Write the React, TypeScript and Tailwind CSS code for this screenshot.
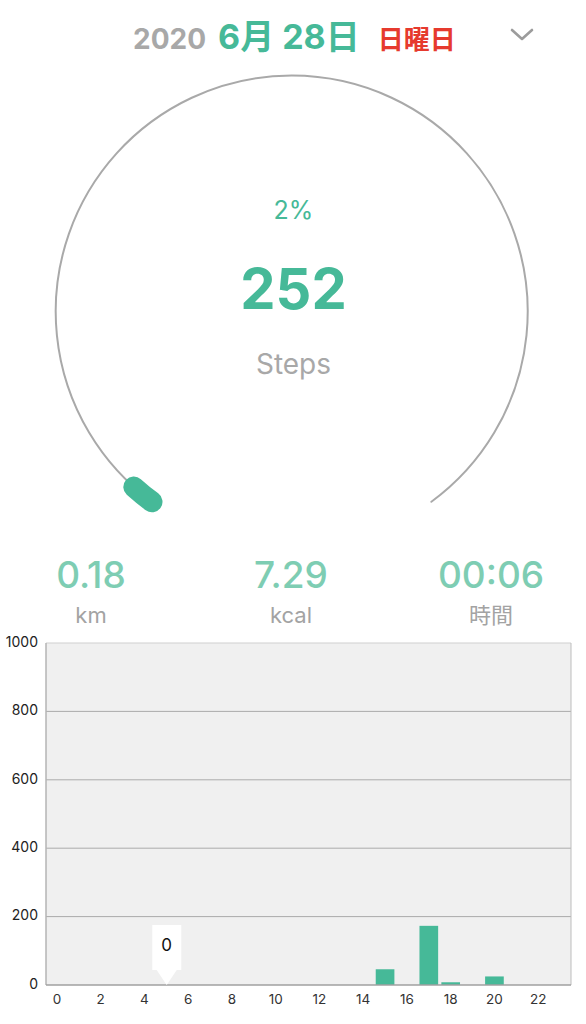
import React from "react";

const FONT = { fontFamily: 'Inter, "Noto Sans CJK JP", "Noto Sans", sans-serif' };

const HOURLY: Record<number, number> = { 15: 46, 17: 173, 18: 8, 20: 25 };

function Gauge() {
  // circle centre (291.7, 237.6) in this box, r = 236
  return (
    <div className="relative h-[470px]">
      <svg className="absolute inset-0" width="586" height="470" viewBox="0 0 586 470">
        <path
          d="M152.0 427.8 A236 236 0 1 1 431.4 427.8"
          fill="none"
          stroke="#a9a9a9"
          strokeWidth="2"
          strokeLinecap="round"
        />
        <path
          d="M152.0 427.8 A236 236 0 0 1 133.8 413.0"
          fill="none"
          stroke="#46b998"
          strokeWidth="21"
          strokeLinecap="round"
        />
      </svg>
      <div className="relative flex flex-col items-center pl-[1px]">
        <div className="mt-[119px] text-[25px] leading-[34px] text-[#46b998]">2%</div>
        <div className="mt-[31px] text-[56px] leading-[62px] font-bold text-[#46b998]">252</div>
        <div className="mt-[27px] text-[28px] leading-[34px] text-[#a8a8a8]">Steps</div>
      </div>
    </div>
  );
}

function Stat({ value, label }: { value: string; label: string }) {
  return (
    <div className="w-[160px] flex flex-col items-center">
      <div className="text-[37px] leading-[42px] font-medium text-[#7ecdb3]">{value}</div>
      <div className="mt-[5px] text-[22px] leading-[28px] text-[#a3a3a3]">{label}</div>
    </div>
  );
}

function Chart() {
  const left = 46;
  const right = 571;
  const top = 9;
  const bottom = 351;
  const slot = (right - left) / 24;
  const scale = (bottom - top) / 1000;
  const ticks = [0, 200, 400, 600, 800, 1000];

  return (
    <svg width="586" height="390" viewBox="0 0 586 390" style={FONT}>
      <rect x={left} y={top} width={right - left} height={bottom - top} fill="#f0f0f0" />
      {ticks.slice(1, 5).map((t) => (
        <line key={t} x1={left} x2={right} y1={bottom - t * scale} y2={bottom - t * scale} stroke="#ababab" strokeWidth="1" />
      ))}
      <line x1={left} x2={right} y1={top} y2={top} stroke="#cfcfcf" strokeWidth="1" />
      <line x1={right} x2={right} y1={top} y2={bottom} stroke="#bdbdbd" strokeWidth="1" />
      <line x1={left} x2={left} y1={top} y2={bottom} stroke="#b5b5b5" strokeWidth="1.5" />
      {ticks.map((t) => (
        <text key={t} x={38} y={bottom - t * scale} textAnchor="end" dominantBaseline="middle" fontSize="14" fill="#222">
          {t}
        </text>
      ))}
      {Object.entries(HOURLY).map(([h, v]) => (
        <rect
          key={h}
          x={left + Number(h) * slot + 1.6}
          y={bottom - v * scale}
          width={slot - 3.2}
          height={v * scale}
          fill="#46b998"
        />
      ))}
      <line x1={left} x2={right} y1={bottom} y2={bottom} stroke="#a0a0a0" strokeWidth="1.5" />
      {Array.from({ length: 12 }, (_, i) => i * 2).map((h) => (
        <text key={h} x={left + (h + 0.5) * slot} y={366} textAnchor="middle" dominantBaseline="middle" fontSize="13.5" fill="#333">
          {h}
        </text>
      ))}
      <g>
        <rect x="152.3" y="291" width="29" height="45" fill="#fff" />
        <polygon points="156.7,336 176.7,336 166.7,351" fill="#fff" />
        <text x="166.7" y="312" textAnchor="middle" dominantBaseline="middle" fontSize="17" fill="#111">
          0
        </text>
      </g>
    </svg>
  );
}

export default function App() {
  return (
    <div className="w-[586px] h-[1024px] bg-white overflow-hidden" style={FONT}>
      <div className="h-[74px] flex items-center pl-[133px] pb-[2px]">
        <div className="flex items-baseline">
          <span className="text-[28px] font-bold text-[#a8a8a8]">2020</span>
          <span className="ml-[12px] text-[34px] font-bold text-[#46b998]">6月 28日</span>
          <span className="ml-[18px] text-[26px] font-bold text-[#e63a2e]">日曜日</span>
        </div>
        <svg className="ml-auto mr-[52px] -mt-[2px]" width="24" height="14" viewBox="0 0 24 14">
          <path d="M2 2 L12 11 L22 2" fill="none" stroke="#9c9c9c" strokeWidth="2.6" strokeLinecap="round" strokeLinejoin="round" />
        </svg>
      </div>
      <Gauge />
      <div className="flex pl-[11px] gap-[40px] pt-[10px] h-[90px]">
        <Stat value="0.18" label="km" />
        <Stat value="7.29" label="kcal" />
        <Stat value="00:06" label="時間" />
      </div>
      <Chart />
    </div>
  );
}
